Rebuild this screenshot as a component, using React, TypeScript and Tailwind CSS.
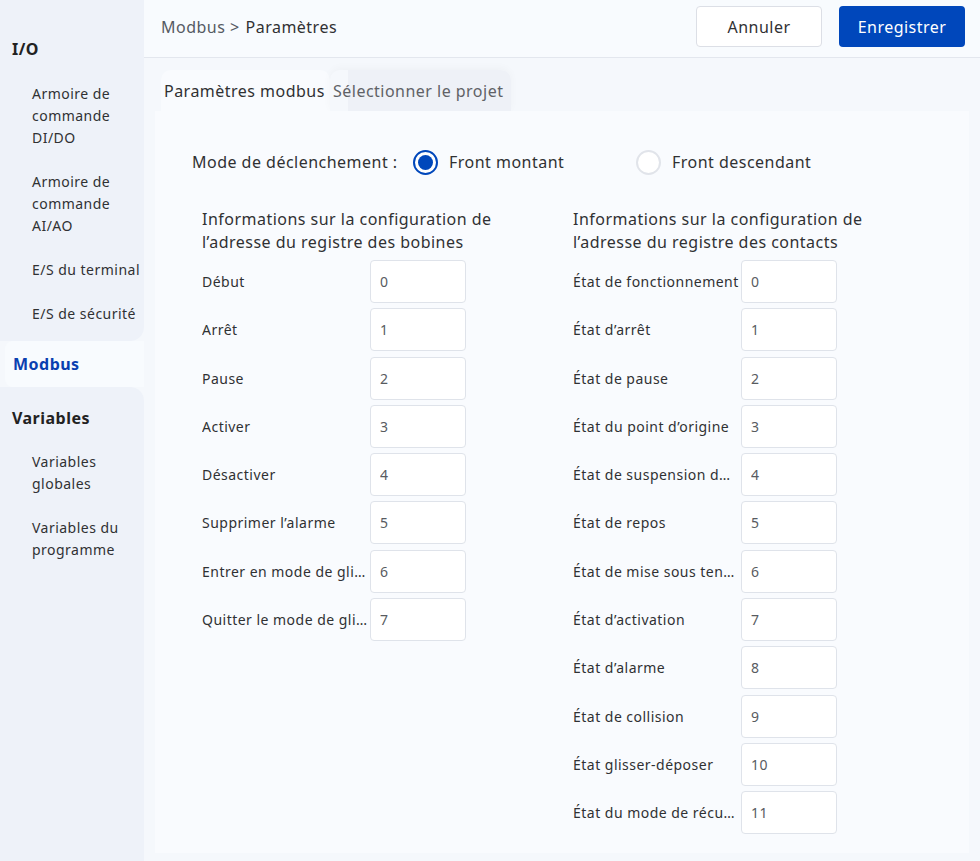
import { useState } from "react";

const coilRows = [
  { label: "Début", value: "0" },
  { label: "Arrêt", value: "1" },
  { label: "Pause", value: "2" },
  { label: "Activer", value: "3" },
  { label: "Désactiver", value: "4" },
  { label: "Supprimer l’alarme", value: "5" },
  { label: "Entrer en mode de glisser-déposer", value: "6" },
  { label: "Quitter le mode de glisser-déposer", value: "7" },
];

const contactRows = [
  { label: "État de fonctionnement", value: "0" },
  { label: "État d’arrêt", value: "1" },
  { label: "État de pause", value: "2" },
  { label: "État du point d’origine", value: "3" },
  { label: "État de suspension du programme", value: "4" },
  { label: "État de repos", value: "5" },
  { label: "État de mise sous tension", value: "6" },
  { label: "État d’activation", value: "7" },
  { label: "État d’alarme", value: "8" },
  { label: "État de collision", value: "9" },
  { label: "État glisser-déposer", value: "10" },
  { label: "État du mode de récupération", value: "11" },
];

function SubItem({ children }: { children: React.ReactNode }) {
  return (
    <div className="pl-[32px] pr-[2px] py-[11px] text-[14px] leading-[22px] text-[#303133]">
      {children}
    </div>
  );
}

function Radio({ checked, label, onClick, width }: { checked: boolean; label: string; onClick: () => void; width: string }) {
  return (
    <button onClick={onClick} className={`flex items-center gap-[11px] ${width}`}>
      <span
        className={`flex h-[25px] w-[25px] items-center justify-center rounded-full border-2 bg-white ${
          checked ? "border-[#0047bb]" : "border-[#e1e4ea]"
        }`}
      >
        {checked && <span className="h-[15px] w-[15px] rounded-full bg-[#0047bb]" />}
      </span>
      <span className="text-[16px] text-[#303133]">{label}</span>
    </button>
  );
}

function FieldRow({ label, value }: { label: string; value: string }) {
  return (
    <div className="flex h-[43px] items-center">
      <div className="w-[168px] truncate pr-[2px] text-[14px] text-[#303133]">{label}</div>
      <input
        defaultValue={value}
        className="h-[43px] w-[96px] rounded-[4px] border border-[#dfe3ea] bg-white px-[9px] text-[14px] text-[#585b61] outline-none"
      />
    </div>
  );
}

function App() {
  const [mode, setMode] = useState("rising");
  const [tab, setTab] = useState("modbus");

  return (
    <div
      className="flex h-[861px] w-full overflow-hidden bg-[#f5f8fc] tracking-[0.03em]"
      style={{ fontFamily: '"Noto Sans", "Liberation Sans", sans-serif' }}
    >
      {/* sidebar */}
      <div className="flex w-[144px] shrink-0 flex-col bg-[#f5f8fc]">
        <div className="rounded-br-[14px] bg-[#eef2f9] pb-[5px] pt-[37px]">
          <div className="pl-[12px] text-[16px] font-bold leading-[24px] text-[#222]">I/O</div>
          <div className="mt-[11px]">
            <SubItem>Armoire de commande DI/DO</SubItem>
            <SubItem>Armoire de commande AI/AO</SubItem>
            <SubItem>E/S du terminal</SubItem>
            <SubItem>E/S de sécurité</SubItem>
          </div>
        </div>
        <div className="ml-[5px] flex h-[46px] items-center rounded-l-[8px] bg-[#f8fbfe] pl-[8px] text-[16px] font-bold text-[#0a3fb0]">
          Modbus
        </div>
        <div className="flex-1 rounded-tr-[14px] bg-[#eef2f9] pt-[19px]">
          <div className="pl-[12px] text-[16px] font-bold leading-[24px] text-[#222]">Variables</div>
          <div className="mt-[10px]">
            <SubItem>Variables globales</SubItem>
            <SubItem>Variables du programme</SubItem>
          </div>
        </div>
      </div>

      {/* main */}
      <div className="flex min-w-0 flex-1 flex-col">
        <div className="flex h-[58px] shrink-0 items-start justify-between border-b border-[#e3e7ee] bg-[#f8fbfe] pl-[17px] pr-[15px] pt-[6px]">
          <div className="flex h-[41px] items-center text-[16px]">
            <span className="text-[#555a63]">Modbus &gt;</span>
            <span className="ml-[6px] text-[#303133]">Paramètres</span>
          </div>
          <div className="flex gap-[17px]">
            <button className="h-[41px] w-[126px] rounded-[4px] border border-[#dcdfe6] bg-white text-[16px] text-[#303133]">
              Annuler
            </button>
            <button className="h-[41px] w-[126px] rounded-[4px] bg-[#0047bb] text-[16px] text-white">
              Enregistrer
            </button>
          </div>
        </div>

        <div className="flex flex-1 flex-col px-[11px] pb-[8px]">
          <div className="flex h-[53px] items-end pl-[6px]">
            <button
              onClick={() => setTab("modbus")}
              className={`h-[41px] w-[169px] shrink-0 whitespace-nowrap rounded-t-[10px] pl-[3px] text-left text-[16px] ${
                tab === "modbus" ? "bg-[#f9fbfe] text-[#303133]" : "text-[#606266]"
              }`}
            >
              Paramètres modbus
            </button>
            <button
              onClick={() => setTab("project")}
              className={`h-[41px] whitespace-nowrap rounded-t-[10px] pl-[3px] pr-[8px] text-left text-[16px] shadow-[0_-2px_8px_rgba(0,0,0,0.03)] ${
                tab === "project" ? "bg-[#f9fbfe] text-[#303133]" : "bg-[linear-gradient(90deg,transparent_18px,#eef1f7_18px)] text-[#606266]"
              }`}
            >
              Sélectionner le projet
            </button>
          </div>

          <div className="flex-1 bg-[#f9fbfe] pl-[37px] pt-[37px]">
            <div className="flex h-[28px] items-center">
              <span className="w-[221px] text-[16px] text-[#303133]">Mode de déclenchement :</span>
              <Radio checked={mode === "rising"} label="Front montant" onClick={() => setMode("rising")} width="w-[223px]" />
              <Radio checked={mode === "falling"} label="Front descendant" onClick={() => setMode("falling")} width="" />
            </div>

            <div className="mt-[32px] flex pl-[10px]">
              <div className="w-[371px]">
                <div className="mb-[6px] text-[16px] leading-[23px] text-[#303133]">
                  Informations sur la configuration de
                  <br />
                  l’adresse du registre des bobines
                </div>
                <div className="flex flex-col gap-[5.3px]">
                  {coilRows.map((r) => (
                    <FieldRow key={r.label} label={r.label} value={r.value} />
                  ))}
                </div>
              </div>
              <div>
                <div className="mb-[6px] text-[16px] leading-[23px] text-[#303133]">
                  Informations sur la configuration de
                  <br />
                  l’adresse du registre des contacts
                </div>
                <div className="flex flex-col gap-[5.3px]">
                  {contactRows.map((r) => (
                    <FieldRow key={r.label} label={r.label} value={r.value} />
                  ))}
                </div>
              </div>
            </div>
          </div>
        </div>
      </div>
    </div>
  );
}

export default App;
